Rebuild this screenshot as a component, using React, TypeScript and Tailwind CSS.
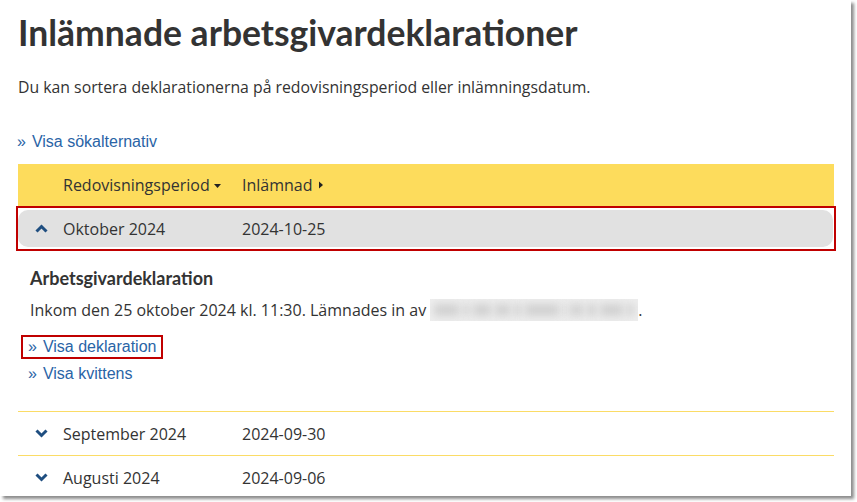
import React from 'react'

const sans = "font-['Open_Sans',sans-serif]"
const link = "font-['Liberation_Sans',Arial,sans-serif] text-[16px] text-[#2a64a6]"

function ChevronUp(): JSX.Element {
  return (
    <svg width="13" height="9" viewBox="0 0 13 9" className="shrink-0">
      <polyline points="1.5,7.5 6.5,2.5 11.5,7.5" fill="none" stroke="#1f4e80" strokeWidth="3" />
    </svg>
  )
}

function ChevronDown(): JSX.Element {
  return (
    <svg width="13" height="9" viewBox="0 0 13 9" className="shrink-0">
      <polyline points="1.5,1.5 6.5,6.5 11.5,1.5" fill="none" stroke="#1f4e80" strokeWidth="3" />
    </svg>
  )
}

function LinkItem({ label }: { label: string }): JSX.Element {
  return (
    <span className={link}>
      <span className="mr-[6px]">»</span>
      {label}
    </span>
  )
}

function PeriodRow({ period, date }: { period: string; date: string }): JSX.Element {
  return (
    <div className="flex items-center h-[44px] border-t border-[#fbdc66]">
      <div className="w-[45px] flex justify-center pl-[1px]">
        <ChevronDown />
      </div>
      <span className="w-[179px] text-[16px] text-[#333]">{period}</span>
      <span className="text-[16px] text-[#333]">{date}</span>
    </div>
  )
}

export default function App(): JSX.Element {
  const blurBlocks = [30, 6, 22, 18, 8, 40, 4, 16, 10, 28, 8]
  return (
    <div className="w-[857px] h-[502px] bg-white">
      <div className={`w-[851px] h-[496px] bg-white overflow-hidden shadow-[3px_3px_3px_rgba(0,0,0,0.45)] ${sans}`}>
        <div className="pl-[18px] w-[834px]">
          <h1 className="font-['Lato',sans-serif] font-bold text-[35.5px] leading-[44px] text-[#333] pt-[11px]">
            Inlämnade arbetsgivardeklarationer
          </h1>
          <p className="text-[15.8px] text-[#333] mt-[20px] leading-[24px]">
            Du kan sortera deklarationerna på redovisningsperiod eller inlämningsdatum.
          </p>
          <div className="mt-[32px] leading-[20px] -ml-[1px]">
            <LinkItem label="Visa sökalternativ" />
          </div>

          <div className="mt-[12px] bg-[#fddc5c] h-[42px] flex items-center text-[16px] text-[#333]">
            <div className="w-[45px]" />
            <span className="w-[179px] flex items-center">
              Redovisningsperiod
              <svg width="9" height="6" viewBox="0 0 9 6" className="ml-[3px] mt-[1px]">
                <polygon points="1,1 8,1 4.5,5" fill="#222" />
              </svg>
            </span>
            <span className="flex items-center">
              Inlämnad
              <svg width="7" height="10" viewBox="0 0 7 10" className="ml-[5px]">
                <polygon points="1,1.5 5,5 1,8.5" fill="#222" />
              </svg>
            </span>
          </div>

          <div className="-mx-[2px] border-2 border-[#c00000] pt-[2px] pb-[2px] pl-[0px] pr-[1px]">
            <div className="bg-[#e1e1e1] rounded-[10px] h-[37px] flex items-center">
              <div className="w-[45px] flex justify-center pl-[2px]">
                <ChevronUp />
              </div>
              <span className="w-[179px] text-[16px] text-[#333]">Oktober 2024</span>
              <span className="text-[16px] text-[#333]">2024-10-25</span>
            </div>
          </div>

          <div className="pl-[12px] pt-[16px] pb-[27px]">
            <h2 className="font-['Lato',sans-serif] font-bold text-[18px] leading-[22px] text-[#333]">
              Arbetsgivardeklaration
            </h2>
            <div className="mt-[9px] text-[16px] text-[#333] leading-[24px] flex items-center">
              <span>Inkom den 25 oktober 2024 kl. 11:30. Lämnades in av</span>
              <span className="ml-[4px] w-[208px] h-[22px] bg-[#eeeeee] flex items-center gap-[4px] px-[4px] overflow-hidden">
                {blurBlocks.map((w, i) => (
                  <span key={i} className="h-[12px] bg-[#d0d0d0] blur-[4px]" style={{ width: w }} />
                ))}
              </span>
              <span>.</span>
            </div>
            <div className="mt-[13px] flex flex-col items-start">
              <div className="-ml-[9px] border-2 border-[#c00000] px-[5px] h-[24px] flex items-center">
                <LinkItem label="Visa deklaration" />
              </div>
              <div className="-ml-[2px] mt-[4px] leading-[20px]">
                <LinkItem label="Visa kvittens" />
              </div>
            </div>
          </div>

          <PeriodRow period="September 2024" date="2024-09-30" />
          <PeriodRow period="Augusti 2024" date="2024-09-06" />
        </div>
      </div>
    </div>
  )
}
